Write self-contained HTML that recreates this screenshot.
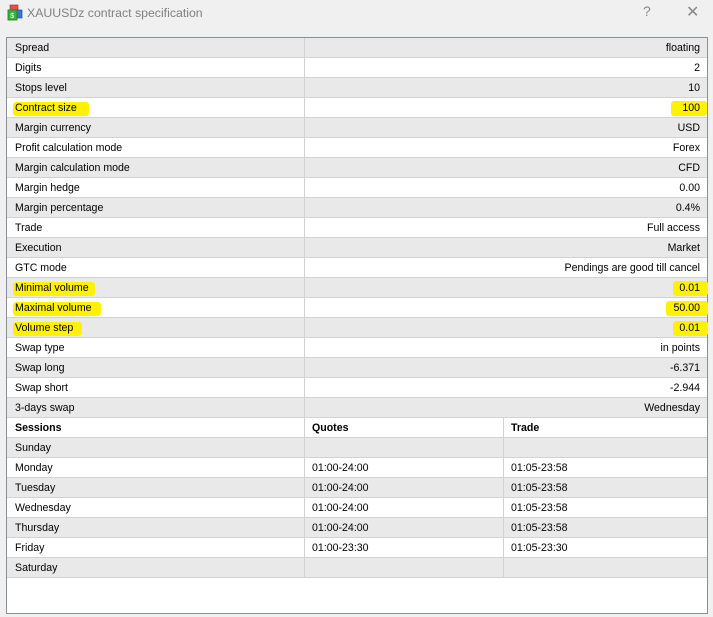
<!DOCTYPE html>
<html><head><meta charset="utf-8"><style>
*{margin:0;padding:0;box-sizing:border-box}
body{width:713px;height:617px;background:#f0f0f0;font-family:"Liberation Sans",Arial,sans-serif;font-size:10.6px;color:#000;position:relative;overflow:hidden}
.title{position:absolute;left:27px;top:6px;font-size:12.3px;color:#808080}
.ctl{position:absolute;top:3px;font-size:14px;color:#888}
.box{position:absolute;left:6px;top:37px;width:702px;height:577px;border:1px solid #8a8f96;background:#fff}
.r{position:absolute;left:0;width:700px;height:20px;border-bottom:1px solid #d2d2d2;background:#fff}
.g{background:#e9e9e9}
.c{position:absolute;top:0;height:19px;line-height:21px;padding-left:8px;white-space:nowrap}
.v{position:absolute;right:7px;top:0;line-height:21px}
.sep{position:absolute;top:0;width:1px;height:19px;background:#d2d2d2}
.hl{position:absolute;background:#fff200;border-radius:3px}
b{font-weight:bold}
</style></head><body>
<svg style="position:absolute;left:6px;top:4px" width="18" height="18" viewBox="0 0 18 18">
<rect x="4" y="1" width="8" height="6" fill="#d9534f" stroke="#a33" stroke-width=".7"/>
<rect x="9" y="6" width="7" height="8" fill="#3a78c8" stroke="#1f4f8f" stroke-width=".7"/>
<rect x="2" y="6" width="9" height="10" fill="#3cb043" stroke="#1d7a24" stroke-width=".8"/>
<text x="4.2" y="14" font-size="7" fill="#fff" font-family="Liberation Sans">$</text>
</svg>
<div class="title">XAUUSDz contract specification</div>
<div class="ctl" style="left:643px">?</div>
<div class="ctl" style="left:686px;font-size:16px;top:2px">✕</div>
<div class="box"></div>
<div id="rows" style="position:absolute;left:7px;top:38px"></div>
<script>
var spec=[["Spread","floating"],["Digits","2"],["Stops level","10"],["Contract size","100"],["Margin currency","USD"],["Profit calculation mode","Forex"],["Margin calculation mode","CFD"],["Margin hedge","0.00"],["Margin percentage","0.4%"],["Trade","Full access"],["Execution","Market"],["GTC mode","Pendings are good till cancel"],["Minimal volume","0.01"],["Maximal volume","50.00"],["Volume step","0.01"],["Swap type","in points"],["Swap long","-6.371"],["Swap short","-2.944"],["3-days swap","Wednesday"]];
var hl={3:[76,664,36],12:[82,666,35],13:[88,659,42],14:[69,666,35]};
var ses=[["<b>Sessions</b>","<b>Quotes</b>","<b>Trade</b>"],["Sunday","",""],["Monday","01:00-24:00","01:05-23:58"],["Tuesday","01:00-24:00","01:05-23:58"],["Wednesday","01:00-24:00","01:05-23:58"],["Thursday","01:00-24:00","01:05-23:58"],["Friday","01:00-23:30","01:05-23:30"],["Saturday","",""]];
var h="";
spec.forEach(function(s,i){var x=hl[i];var hh=x?'<div class="hl" style="left:6px;top:4px;width:'+x[0]+'px;height:14px"></div><div class="hl" style="left:'+x[1]+'px;top:3px;width:'+x[2]+'px;height:15px"></div>':'';
h+='<div class="r'+(i%2==0?' g':'')+'" style="top:'+(i*20)+'px">'+hh+'<div class="c">'+s[0]+'</div><div class="sep" style="left:297px"></div><div class="v">'+s[1]+'</div></div>';});
ses.forEach(function(s,j){var i=j+19;h+='<div class="r'+(j%2==1?' g':'')+'" style="top:'+(i*20)+'px"><div class="c">'+s[0]+'</div><div class="sep" style="left:297px"></div><div class="c" style="left:297px">'+s[1]+'</div><div class="sep" style="left:496px"></div><div class="c" style="left:496px">'+s[2]+'</div></div>';});
document.getElementById("rows").innerHTML=h;
</script>
</body></html>
